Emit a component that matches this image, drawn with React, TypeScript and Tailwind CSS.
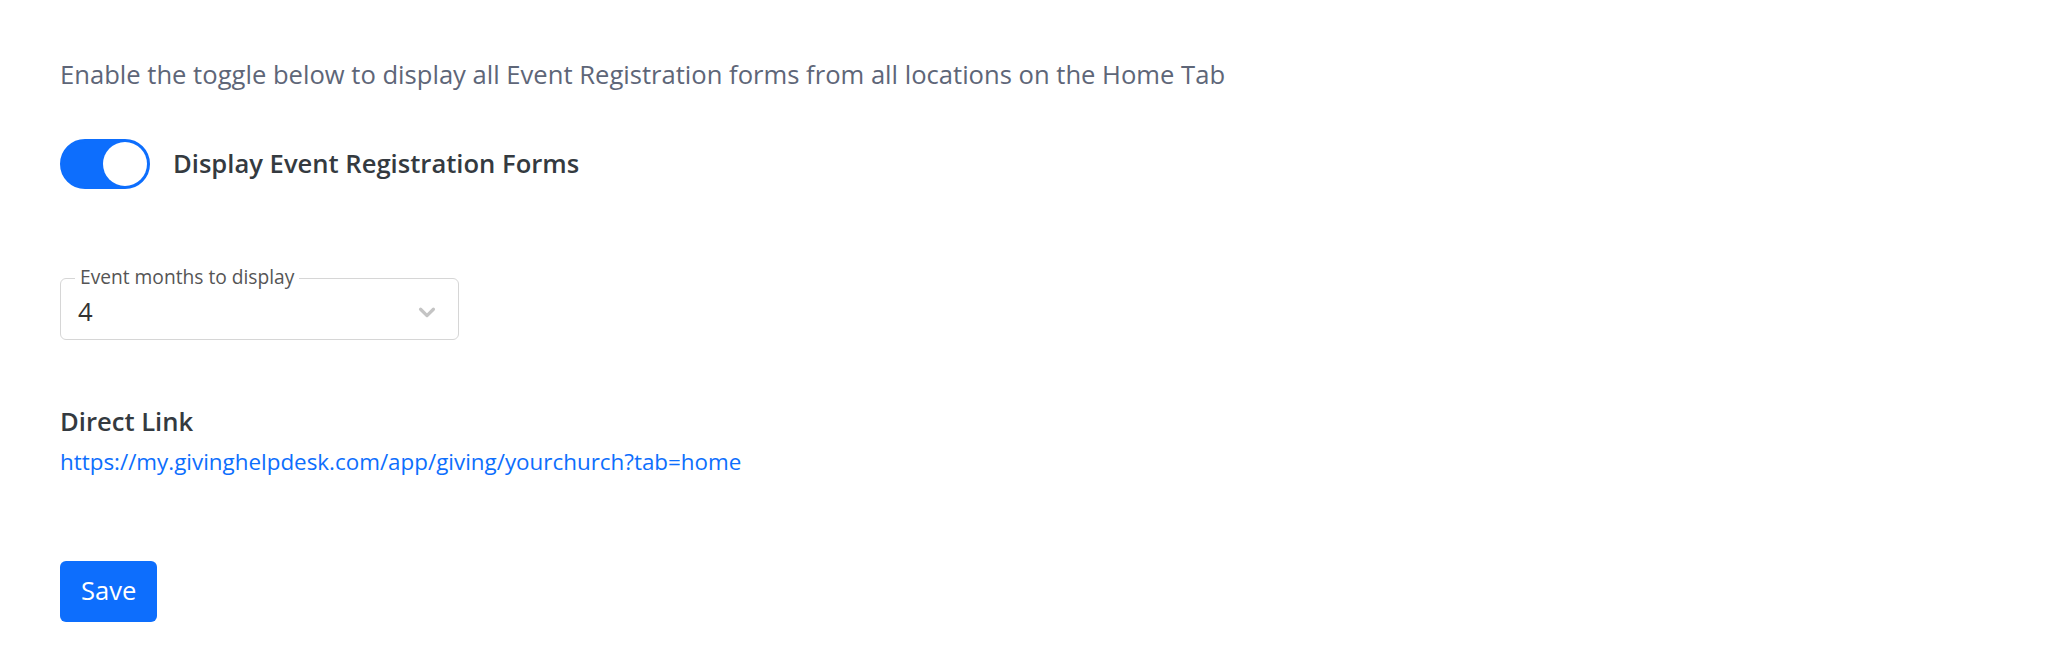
import { useState } from "react";

const App = () => {
  const [enabled, setEnabled] = useState(true);
  const [months, setMonths] = useState("4");

  return (
    <div className="min-h-[656px] w-full bg-white font-['Open_Sans',sans-serif]">
      <div className="flex flex-col items-start px-[60px] pt-[58px]">
        <p className="text-[25.6px] leading-[34px] text-[#5e6678]">
          Enable the toggle below to display all Event Registration forms from all locations on the Home Tab
        </p>

        {/* Toggle */}
        <div className="mt-[47px] flex items-center gap-[23px]">
          <button
            type="button"
            onClick={() => setEnabled(!enabled)}
            className={`flex h-[50px] w-[90px] items-center rounded-full border-[3px] ${
              enabled
                ? "justify-end border-[#0d6efd] bg-[#0d6efd]"
                : "justify-start border-[#ced4da] bg-white"
            }`}
          >
            <span
              className={`block h-[44px] w-[44px] rounded-full ${
                enabled ? "bg-white" : "bg-[#ced4da]"
              }`}
            />
          </button>
          <span className="text-[25.6px] font-semibold leading-[34px] text-[#343a40]">
            Display Event Registration Forms
          </span>
        </div>

        {/* Select */}
        <div className="relative mt-[89px] h-[62px] w-[399px] rounded-[6px] border border-[#d6d6d6]">
          <span className="absolute left-[14px] top-[-14px] bg-white px-[5px] text-[19.2px] leading-[24px] text-[#555]">
            Event months to display
          </span>
          <div className="flex h-full items-center justify-between pl-[17px] pr-[20px] pt-[6px]">
            <span className="text-[25.6px] leading-[30px] text-[#333]">{months}</span>
            <svg width="22" height="22" viewBox="0 0 24 24" fill="none" stroke="#c4c4c4" strokeWidth="3.5" strokeLinecap="round" strokeLinejoin="round">
              <path d="M5 9l7 7 7-7" />
            </svg>
          </div>
          <select
            value={months}
            onChange={(e) => setMonths(e.target.value)}
            className="absolute inset-0 opacity-0"
          >
            {["1", "2", "3", "4", "5", "6", "12"].map((m) => (
              <option key={m} value={m}>
                {m}
              </option>
            ))}
          </select>
        </div>

        {/* Direct link */}
        <h3 className="mt-[66px] text-[25.6px] font-semibold leading-[32px] text-[#343a40]">
          Direct Link
        </h3>
        <a
          href="#"
          className="mt-[10px] text-[22.4px] leading-[28px] text-[#0d6efd]"
        >
          https://my.givinghelpdesk.com/app/giving/yourchurch?tab=home
        </a>

        <button
          type="button"
          className="mt-[85px] h-[61px] rounded-[6px] bg-[#0d6efd] px-[21px] text-[25.6px] text-white"
        >
          Save
        </button>
      </div>
    </div>
  );
};

export default App;
